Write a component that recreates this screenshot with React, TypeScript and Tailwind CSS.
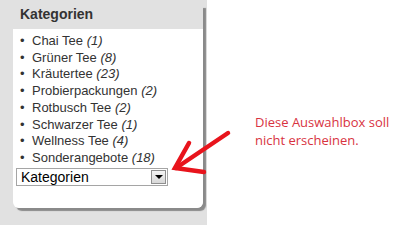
const categories = [
  { name: "Chai Tee", count: 1 },
  { name: "Grüner Tee", count: 8 },
  { name: "Kräutertee", count: 23 },
  { name: "Probierpackungen", count: 2 },
  { name: "Rotbusch Tee", count: 2 },
  { name: "Schwarzer Tee", count: 1 },
  { name: "Wellness Tee", count: 4 },
  { name: "Sonderangebote", count: 18 },
]

export default function App() {
  return (
    <div className="relative flex w-[411px] h-[242px] bg-white font-['Liberation_Sans',Arial,sans-serif]">
      {/* Sidebar */}
      <div className="w-[207px] h-[225px] bg-[#e1e1e1] pl-[13px] pt-[5px]">
        <div className="w-[190px] rounded-b-[6px] shadow-[3px_3px_1px_#8a8a8a]">
          <div className="h-[24px] bg-[#e1e1e1] pl-[7px] pt-[1px] text-[14px] leading-[16px] font-bold text-[#333]">Kategorien</div>
          <div className="h-[179px] bg-white rounded-b-[6px] pt-[4px] pl-[3px]">
            <ul className="text-[13px] leading-[16.7px] text-[#333]">
              {categories.map((c) => (
                <li key={c.name} className="flex">
                  <span className="w-[16px] pl-[4px]">•</span>
                  <span>
                    {c.name} <i>({c.count})</i>
                  </span>
                </li>
              ))}
            </ul>
            <div className="mt-px flex w-[152px] h-[18px] border border-[#a5a5a5] bg-white">
              <span className="flex-1 pl-[4px] text-[14px] leading-[16px] text-black">Kategorien</span>
              <span className="m-[1px] flex w-[15px] items-center justify-center border border-[#8f8f8f] bg-gradient-to-b from-[#f4f4f4] to-[#d8d8d8]">
                <span className="border-x-[4px] border-t-[4px] border-x-transparent border-t-black" />
              </span>
            </div>
          </div>
        </div>
      </div>

      {/* Note */}
      <div className="pl-[48px] pt-[113px] text-[13px] leading-[18px] text-[#d8333f] font-['Open_Sans',sans-serif]">
        Diese Auswahlbox soll
        <br />
        nicht erscheinen.
      </div>

      {/* Red arrow */}
      <svg className="absolute left-0 top-0" width="411" height="242">
        <g stroke="#e8141c" strokeWidth="4.5" strokeLinecap="round" fill="none">
          <path d="M228 133 L176 168" />
          <path d="M189 143 L175 168 L204 172" />
        </g>
      </svg>
    </div>
  )
}
